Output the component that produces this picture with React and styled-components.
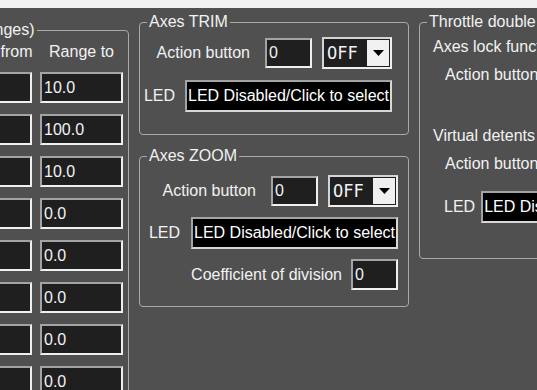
import React from 'react';
import styled, { createGlobalStyle } from 'styled-components';

const Global = createGlobalStyle`
  html, body { margin: 0; padding: 0; background: #505050; overflow: hidden; }
  body { font-family: "Liberation Sans", Arial, sans-serif; }
`;

const Screen = styled.div`
  width: 537px;
  height: 390px;
  overflow: hidden;
  background: #505050;
  display: flex;
  flex-direction: column;
`;

const TopStrip = styled.div`
  flex: none;
  height: 8px;
  background: #f0f0f0;
`;

const Workspace = styled.div`
  display: flex;
  align-items: flex-start;
  gap: 10px;
  margin-left: -139px;
`;

const Group = styled.fieldset`
  box-sizing: border-box;
  flex: none;
  margin: ${p => p.$mt || 0}px 0 0 0;
  padding: 0;
  min-width: 0;
  width: ${p => p.$w}px;
  border: 1px solid #a9a9a9;
  border-radius: 4px;
`;

const Legend = styled.legend`
  margin-left: ${p => p.$ml ?? 7}px;
  padding: 0 2px;
  font-size: 16px;
  line-height: 18px;
  color: #f2f2f2;
  white-space: nowrap;
`;

const Body = styled.div`
  display: flex;
  flex-direction: column;
  align-items: ${p => (p.$right ? 'flex-end' : 'flex-start')};
  gap: ${p => p.$gap || 0}px;
  padding: ${p => p.$pad};
`;

const Column = styled.div`
  flex: none;
  display: flex;
  flex-direction: column;
  gap: 12px;
  margin-top: 5px;
  width: 270px;
`;

const RangeGrid = styled.div`
  display: grid;
  grid-template-columns: repeat(2, 83px);
  column-gap: 8px;
  row-gap: 11px;
  justify-content: end;
  padding: 4px 5px 12px 0;
`;

const ColHead = styled.div`
  text-align: center;
  font-size: 16px;
  line-height: 18px;
  color: #f2f2f2;
  white-space: nowrap;
`;

const Row = styled.div`
  display: flex;
  align-items: center;
  gap: ${p => p.$gap || 10}px;
  margin-top: ${p => p.$mt || 0}px;
  margin-left: ${p => p.$ml || 0}px;
`;

const Label = styled.span`
  font-size: 16px;
  line-height: 18px;
  color: #f2f2f2;
  white-space: nowrap;
  margin-right: ${p => p.$extra || 0}px;
`;

const Text = styled.div`
  font-size: 16px;
  line-height: 18px;
  color: #f2f2f2;
  white-space: nowrap;
  margin-top: ${p => p.$mt || 0}px;
`;

const Field = styled.input`
  box-sizing: border-box;
  flex: none;
  width: ${p => p.$w}px;
  height: ${p => p.$h || 31}px;
  margin: 0;
  padding: 0 0 0 2px;
  background: #1f1f1f;
  border: 2px solid;
  border-color: #a4a4a4 #f0f0f0 #f0f0f0 #a4a4a4;
  color: #f2f2f2;
  font-family: "Liberation Sans", Arial, sans-serif;
  font-size: 16px;
  outline: none;
`;

const Select = styled.div`
  box-sizing: border-box;
  flex: none;
  display: flex;
  width: 70px;
  height: 32px;
  padding: 1px;
  border: 2px solid;
  border-color: #d4d4d4 #f0f0f0 #f0f0f0 #d4d4d4;
  background: #1f1f1f;
`;

const SelectValue = styled.span`
  flex: 1;
  padding-left: 2px;
  font-family: "DejaVu Sans Mono", "Liberation Mono", monospace;
  font-size: 17px;
  line-height: 26px;
  color: #f2f2f2;
`;

const SelectButton = styled.span`
  flex: none;
  width: 22px;
  background: #f0f0f0;
  display: flex;
  align-items: center;
  justify-content: center;
`;

const LedBox = styled.div`
  box-sizing: border-box;
  flex: none;
  width: 207px;
  height: 32px;
  padding-left: 1px;
  background: #000;
  border: 2px solid;
  border-color: #a4a4a4 #d8d8d8 #d8d8d8 #a4a4a4;
  color: #fff;
  font-size: 16px;
  line-height: 28px;
  white-space: nowrap;
  overflow: hidden;
`;

const Dropdown = ({ value }) => (
  <Select>
    <SelectValue>{value}</SelectValue>
    <SelectButton>
      <svg width="11" height="6" viewBox="0 0 11 6">
        <path d="M0 0 H11 L5.5 6 Z" fill="#000" />
      </svg>
    </SelectButton>
  </Select>
);

const ranges = [
  ['-10.0', '10.0'],
  ['0.0', '100.0'],
  ['-10.0', '10.0'],
  ['0.0', '0.0'],
  ['0.0', '0.0'],
  ['0.0', '0.0'],
  ['0.0', '0.0'],
  ['0.0', '0.0'],
];

export default function App() {
  return (
    <Screen>
      <Global />
      <TopStrip />
      <Workspace>
        <Group $w={268} $mt={13}>
          <Legend $ml={71}>Axes (ranges)</Legend>
          <RangeGrid>
            <ColHead>Range from</ColHead>
            <ColHead>Range to</ColHead>
            {ranges.map(([a, b], i) => (
              <React.Fragment key={i}>
                <Field $w={83} readOnly value={a} />
                <Field $w={83} readOnly value={b} />
              </React.Fragment>
            ))}
          </RangeGrid>
        </Group>

        <Column>
          <Group $w={270}>
            <Legend>Axes TRIM</Legend>
            <Body $right $gap={11} $pad="6px 16px 22px 8px">
              <Row>
                <Label $extra={5}>Action button</Label>
                <Field $w={47} $h={30} readOnly value="0" />
                <Dropdown value="OFF" />
              </Row>
              <Row>
                <Label>LED</Label>
                <LedBox>LED Disabled/Click to select</LedBox>
              </Row>
            </Body>
          </Group>
          <Group $w={270}>
            <Legend>Axes ZOOM</Legend>
            <Body $right $gap={10} $pad="10px 10px 16px 8px">
              <Row>
                <Label $extra={5}>Action button</Label>
                <Field $w={47} $h={30} readOnly value="0" />
                <Dropdown value="OFF" />
              </Row>
              <Row $gap={11}>
                <Label>LED</Label>
                <LedBox>LED Disabled/Click to select</LedBox>
              </Row>
              <Row $gap={9}>
                <Label>Coefficient of division</Label>
                <Field $w={47} $h={31} readOnly value="0" />
              </Row>
            </Body>
          </Group>
        </Column>

        <Group $w={300} $mt={5}>
          <Legend>Throttle double axes</Legend>
          <Body $pad="0 0 35px 13px">
            <Text $mt={7}>Axes lock function</Text>
            <Row $mt={3} $ml={12}>
              <Label $extra={5}>Action button</Label>
              <Field $w={47} $h={30} readOnly value="0" />
              <Dropdown value="OFF" />
            </Row>
            <Text $mt={36}>Virtual detents</Text>
            <Row $mt={3} $ml={12}>
              <Label $extra={5}>Action button</Label>
              <Field $w={47} $h={30} readOnly value="0" />
              <Dropdown value="OFF" />
            </Row>
            <Row $mt={11} $ml={11} $gap={6}>
              <Label>LED</Label>
              <LedBox>LED Disabled/Click to select</LedBox>
            </Row>
          </Body>
        </Group>
      </Workspace>
    </Screen>
  );
}
